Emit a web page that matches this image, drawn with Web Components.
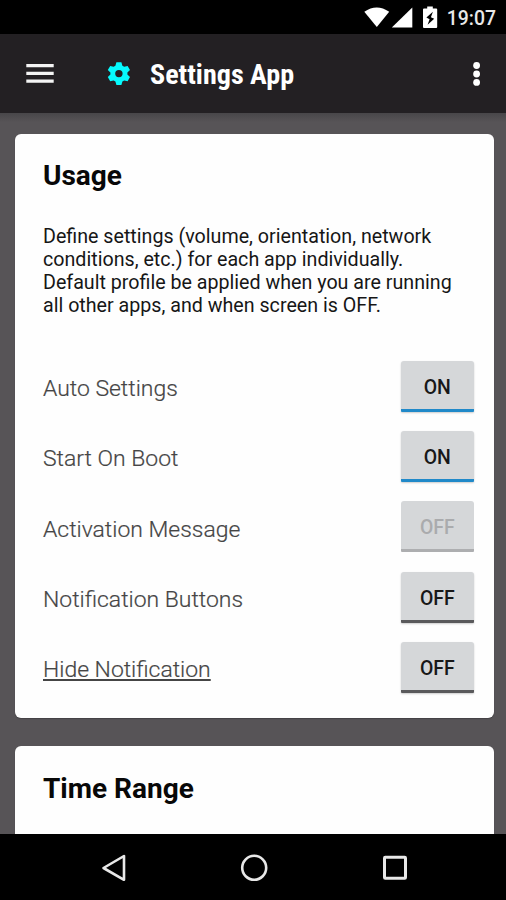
<!DOCTYPE html>
<html lang="en">
<head>
<meta charset="utf-8">
<title>Settings App</title>
<style>
html, body { margin: 0; height: 100%; overflow: hidden; }
body { font-family: Roboto, "Liberation Sans", sans-serif; background: #575457; color: #0c0c0c; }
</style>
</head>
<body>
<phone-screen>
  <status-bar slot="top" time="19:07"></status-bar>
  <app-header slot="top">Settings App</app-header>
  <settings-card heading="Usage">
    <usage-text>Define settings (volume, orientation, network<br>conditions, etc.) for each app individually.<br>Default profile be applied when you are running<br>all other apps, and when screen is OFF.</usage-text>
    <setting-row state="on">Auto Settings</setting-row>
    <setting-row state="on">Start On Boot</setting-row>
    <setting-row state="disabled">Activation Message</setting-row>
    <setting-row state="off">Notification Buttons</setting-row>
    <setting-row state="off" link>Hide Notification</setting-row>
  </settings-card>
  <settings-card heading="Time Range"></settings-card>
  <nav-bar slot="bottom"></nav-bar>
</phone-screen>
<script>
const define = (name, render) => customElements.define(name, class extends HTMLElement {
  connectedCallback() {
    if (!this.shadowRoot) this.attachShadow({ mode: 'open' }).innerHTML = render(this);
  }
});

define('phone-screen', () => `
<style>
:host { display: flex; flex-direction: column; height: 900px; width: 506px; }
main { flex: 1; min-height: 0; overflow: hidden; box-sizing: border-box; display: flex; flex-direction: column; gap: 28.1px;
  padding: 21px 12px 0 14.5px; background: linear-gradient(#484649, #575457 9px); }
</style>
<slot name="top"></slot><main><slot></slot></main><slot name="bottom"></slot>`);

define('status-bar', el => `
<style>
:host { display: flex; height: 34px; box-sizing: border-box; background: #000; color: #e8e8e8; justify-content: flex-end; align-items: flex-start; padding-right: 10px; }
svg { display: block; width: 82px; height: 34px; margin-right: 1.2px; }
span { font: 500 19.4px/23px Roboto, sans-serif; padding-top: 7px; }
</style>
<svg viewBox="0 0 82 34" fill="#fff">
  <path d="M.3 11.8Q12.7 3.3 25.2 11.8L12.8 27Z"/>
  <path d="M48.3 7.5V27.6H27.8Z"/>
  <path fill-rule="evenodd" d="M63.2 6.6H68.8V8.6H72.2Q73.2 8.6 73.2 9.6V27Q73.2 28 72.2 28H60Q59 28 59 27V9.6Q59 8.6 60 8.6H63.2ZM68.9 11.8L62.4 17.4L65.6 19.2L63.6 24.8L70.2 18.8L66.9 17.3Z"/>
</svg><span>${el.getAttribute('time')}</span>`);

define('app-header', () => `
<style>
:host { display: flex; align-items: center; height: 79px; box-sizing: border-box; background: #232023; color: #fff; padding: 0 21px 0 26px; }
svg { display: block; }
.gear { margin-left: 53px; }
h1 { flex: 1; margin: 2px 0 0 19px; font: 700 28.1px/34px "Roboto Condensed", Roboto, sans-serif; }
</style>
<svg width="28" height="20" viewBox="0 0 28 20" fill="#f4f4f4"><path d="M.3 0H27.7V3.2H.3ZM.3 7.7H27.7V10.9H.3ZM.3 15.5H27.7V18.7H.3Z"/></svg>
<svg class="gear" width="24" height="24" viewBox="0 0 24 24"><path fill="#06fafd" fill-rule="evenodd" d="M9.4.2H14.4L15.4 3.8L17.2 4.8L20.6 3.9L23 8.1L20.4 10.6V12.6L23 15.1L20.6 19.3L17.2 18.4L15.4 19.4L14.4 23H9.4L8.4 19.4L6.6 18.4L3.2 19.3L.8 15.1L3.4 12.6V10.6L.8 8.1L3.2 3.9L6.6 4.8L8.4 3.8ZM11.9 7.9A3.7 3.7 0 1 0 11.9 15.3A3.7 3.7 0 1 0 11.9 7.9Z"/></svg>
<h1><slot></slot></h1>
<svg width="16" height="26" viewBox="0 0 16 26" fill="#fff"><circle cx="7.6" cy="4.5" r="3.4"/><circle cx="7.6" cy="13" r="3.4"/><circle cx="7.6" cy="21.4" r="3.4"/></svg>`);

define('settings-card', el => `
<style>
:host { display: block; box-sizing: border-box; flex: none; height: 584.3px; background: #fefefe; border-radius: 6px; padding: 25.2px 20px 0 28.5px; box-shadow: 0 1px 1px #444145; }
h2 { margin: 0; font: 700 28px/34px Roboto, sans-serif; color: #080808; }
</style>
<h2>${el.getAttribute('heading')}</h2><slot></slot>`);

define('usage-text', () => `
<style>
:host { display: block; margin: 31.8px 0 34.2px; font-size: 19.66px; line-height: 23px; white-space: nowrap; color: #161616; }
</style><slot></slot>`);

define('setting-row', el => `
<style>
:host { display: flex; justify-content: space-between; align-items: center; height: 70.3px; color: #454545; font: 300 22.95px/28px Roboto, sans-serif; -webkit-text-stroke: .2px #454545; }
:host([link]) .label { text-decoration: underline; text-decoration-thickness: 1.5px; text-underline-offset: 2px; text-decoration-skip-ink: none; }
.label { padding-top: 5.4px; }
</style>
<span class="label"><slot></slot></span>
<toggle-button state="${el.getAttribute('state')}"></toggle-button>`);

define('toggle-button', el => `
<style>
:host { display: block; width: 73.5px; height: 51px; box-sizing: border-box; border-radius: 3px 3px 1px 1px; background: #d5d7d9; border-bottom: 3px solid #59595b;
  box-shadow: 0 1px 2px #0003; color: #181818; text-align: center; font: 500 19.4px/53px Roboto, sans-serif; -webkit-text-stroke: 0; }
:host([state=on]) { border-bottom-color: #2089c9; }
:host([state=disabled]) { border-bottom-color: #adaeb0; color: #aaabad; box-shadow: none; }
</style>${el.getAttribute('state') === 'on' ? 'ON' : 'OFF'}`);

define('nav-bar', () => `
<style>
:host { display: block; height: 66px; background: #000; }
svg { display: block; }
</style>
<svg width="506" height="66" viewBox="0 0 506 66" fill="none" stroke="#e8e8e8" stroke-width="2.6" stroke-linejoin="round">
  <path d="M124 22V45.8L103.5 34Z"/><circle cx="254.2" cy="33.8" r="12"/><rect x="384.5" y="23.3" width="21" height="21" rx=".8" stroke-width="3"/>
</svg>`);
</script>
</body>
</html>
